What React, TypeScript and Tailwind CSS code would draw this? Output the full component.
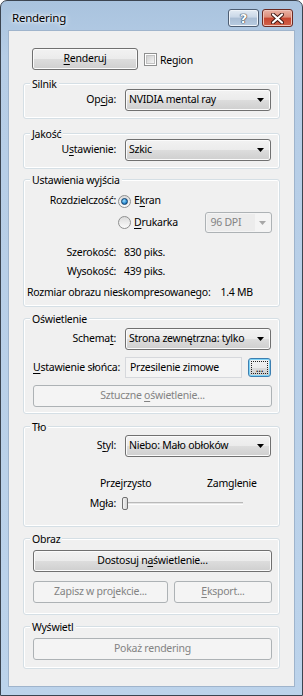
import type { ReactNode } from "react";

const btnFace =
  "bg-[linear-gradient(to_bottom,#f2f2f2_0%,#ebebeb_50%,#dddddd_50%,#cfcfcf_100%)] border border-[#707070] rounded-[3px] shadow-[inset_0_0_0_1px_#fbfbfb]";
const btnDisabled = "bg-[#f4f4f4] border border-[#adb2b5] rounded-[3px] text-[#838383]";

const U = ({ children }: { children: ReactNode }) => <span className="underline underline-offset-2">{children}</span>;

const Group = ({ title, className, children }: { title: string; className: string; children: ReactNode }) => (
  <div className={`flex flex-col border border-[#d5dfe5] rounded-[3px] shadow-[inset_0_0_0_1px_#ffffff] pl-[9px] pr-[7px] ${className}`}>
    <span className="-mt-[8px] -ml-[3px] h-[16px] leading-[16px] px-[2px] bg-[#f0f0f0] self-start">{title}</span>
    {children}
  </div>
);

const Arrow = ({ color = "#000" }: { color?: string }) => (
  <svg width="7" height="4" viewBox="0 0 7 4">
    <path d="M0 0h7L3.5 4z" fill={color} />
  </svg>
);

const Combo = ({ value, className = "" }: { value: string; className?: string }) => (
  <div className={`${btnFace} h-[22px] w-[146px] flex items-center pl-[3px] pr-[6px] ${className}`}>
    <span className="flex-1 whitespace-nowrap overflow-hidden">{value}</span>
    <Arrow />
  </div>
);

const Label = ({ children, w = "w-[83px]" }: { children: ReactNode; w?: string }) => (
  <span className={`${w} text-right whitespace-nowrap`}>{children}</span>
);

const Radio = ({ checked }: { checked?: boolean }) => (
  <span className="w-[13px] h-[13px] rounded-full border border-[#8e8f8f] bg-[linear-gradient(to_bottom,#dcdcdc,#fbfbfb)] flex items-center justify-center shrink-0">
    {checked && (
      <span className="w-[7px] h-[7px] rounded-full border border-[#0f3f6c] bg-[radial-gradient(circle_at_40%_35%,#9fe0ff_0%,#2b8ad0_60%,#134f86_100%)]" />
    )}
  </span>
);

const Button = ({ children, className = "", disabled }: { children: ReactNode; className?: string; disabled?: boolean }) => (
  <div className={`${disabled ? btnDisabled : btnFace} h-[22px] flex items-center justify-center whitespace-nowrap ${className}`}>
    {children}
  </div>
);

export default function App() {
  return (
    <div className="w-[303px] h-[696px] font-['Noto_Sans',sans-serif] text-[10.5px] tracking-[-0.25px] text-black">
      <div className="w-[303px] h-[696px] flex flex-col border border-[#3b4450] rounded-t-[7px] bg-[linear-gradient(to_bottom,#a9c3de_0%,#b6cde6_8%,#bcd3eb_100%)]">
        {/* title bar */}
        <div className="h-[29px] flex items-start shrink-0">
          <span className="ml-[11px] mt-[10px] text-[11.5px] leading-[14px] [text-shadow:0_0_6px_#ffffff,0_0_3px_#ffffff]">Rendering</span>
          <div className="ml-auto mr-[9px] mt-[8px] flex gap-[3px]">
            <div className="w-[31px] h-[18px] rounded-[3px] border border-[#4d5d72] bg-[linear-gradient(to_bottom,#e3ebf4_0%,#c9d7e7_45%,#a9bdd4_50%,#b8cce1_100%)] shadow-[inset_0_0_0_1px_#eef3f9] flex items-center justify-center">
              <span className="text-white font-bold text-[13px] leading-none font-['DejaVu_Sans',sans-serif] [text-shadow:0_0_1px_#2a3440,0_0_1px_#2a3440,0_0_1px_#2a3440]">?</span>
            </div>
            <div className="w-[31px] h-[18px] rounded-[3px] border border-[#6b2a22] bg-[linear-gradient(to_bottom,#eab3a6_0%,#dc8c78_45%,#c7452f_50%,#d0624a_100%)] shadow-[inset_0_0_0_1px_#f0c3b8] flex items-center justify-center">
              <svg width="13" height="11" viewBox="0 0 13 11">
                <path d="M2 1.5l9 8M11 1.5l-9 8" stroke="#3d1510" strokeWidth="4" strokeLinecap="round" />
                <path d="M2 1.5l9 8M11 1.5l-9 8" stroke="#ffffff" strokeWidth="2.2" strokeLinecap="round" />
              </svg>
            </div>
          </div>
        </div>

        {/* client area */}
        <div className="ml-[7px] w-[287px] h-[657px] bg-[#f0f0f0] border border-[#9fb4cc] flex flex-col px-[14px] shrink-0">
          <div className="mt-[17px] flex items-center">
            <Button className="ml-[9px] w-[106px]">
              <U>R</U>enderuj
            </Button>
            <span className="ml-[6px] w-[13px] h-[13px] border border-[#8e8f8f] bg-white flex items-center justify-center">
              <span className="w-[9px] h-[9px] bg-[linear-gradient(135deg,#d0d0d0,#f4f4f4)] border border-[#c2c2c2]" />
            </span>
            <span className="ml-[3px] mt-[3px]">Region</span>
          </div>

          <Group title="Silnik" className="mt-[13px] pb-[7px]">
            <div className="-mt-[3px] flex items-center">
              <Label>
                Op<U>c</U>ja:
              </Label>
              <Combo value="NVIDIA mental ray" className="ml-[9px]" />
            </div>
          </Group>

          <Group title="Jakość" className="mt-[14px] pb-[7px]">
            <div className="-mt-[3px] flex items-center">
              <Label>
                U<U>s</U>tawienie:
              </Label>
              <Combo value="Szkic" className="ml-[9px]" />
            </div>
          </Group>

          <Group title="Ustawienia wyjścia" className="mt-[10px] pb-[5px]">
            <div className="mt-[5px] h-[16px] flex items-center">
              <Label>Rozdzielczość:</Label>
              <span className="ml-[2px]">
                <Radio checked />
              </span>
              <span className="ml-[3px]">
                E<U>k</U>ran
              </span>
            </div>
            <div className="mt-[3px] h-[21px] flex items-center">
              <span className="ml-[85px]">
                <Radio />
              </span>
              <span className="ml-[3px] w-[72px]">
                <U>D</U>rukarka
              </span>
              <div className={`${btnDisabled} h-[21px] w-[67px] flex items-center pl-[1px] pr-[5px]`}>
                <span className="flex-1 h-[17px] leading-[17px] bg-[#ececec] pl-[3px] mr-[4px]">96 DPI</span>
                <Arrow color="#a7a7a7" />
              </div>
            </div>
            <div className="mt-[12px] h-[16px] flex items-center">
              <Label>Szerokość:</Label>
              <span className="ml-[8px]">830 piks.</span>
            </div>
            <div className="mt-[3px] h-[16px] flex items-center">
              <Label>Wysokość:</Label>
              <span className="ml-[8px]">439 piks.</span>
            </div>
            <div className="mt-[5px] h-[16px] flex items-center -ml-[6px] whitespace-nowrap">
              <span>Rozmiar obrazu nieskompresowanego:</span>
              <span className="ml-[10px]">1.4 MB</span>
            </div>
          </Group>

          <Group title="Oświetlenie" className="mt-[11px] pb-[6px]">
            <div className="mt-[1px] flex items-center">
              <Label>
                Schema<U>t</U>:
              </Label>
              <Combo value="Strona zewnętrzna: tylko" className="ml-[9px]" />
            </div>
            <div className="mt-[7px] h-[21px] flex items-center">
              <span className="whitespace-nowrap w-[92px]">
                <U>U</U>stawienie słońca:
              </span>
              <div className="w-[117px] h-[21px] border border-[#d6d8dc] bg-[#f4f4f4] flex items-center pl-[4px] whitespace-nowrap">
                Przesilenie zimowe
              </div>
              <div className="ml-[6px] w-[23px] h-[19px] rounded-[3px] border border-[#3c7fb1] bg-[linear-gradient(to_bottom,#f2f2f2_0%,#ebebeb_50%,#dddddd_50%,#cfcfcf_100%)] shadow-[inset_0_0_0_1px_#7ed3f7] p-[2px]">
                <div className="w-full h-full border border-dotted border-[#222] flex items-end justify-center leading-[10px]">...</div>
              </div>
            </div>
            <Button disabled className="mt-[7px]">
              Sztuczne&nbsp;<U>o</U>świetlenie...
            </Button>
          </Group>

          <Group title="Tło" className="mt-[12px] pb-[15px]">
            <div className="mt-[0px] flex items-center">
              <Label>
                S<U>t</U>yl:
              </Label>
              <Combo value="Niebo: Mało obłoków" className="ml-[9px]" />
            </div>
            <div className="mt-[19px] h-[16px] flex items-center pl-[67px] whitespace-nowrap">
              <span className="w-[107px]">Przejrzysto</span>
              <span>Zamglenie</span>
            </div>
            <div className="mt-[4px] h-[15px] flex items-center">
              <Label>Mgła:</Label>
              <div className="ml-[6px] w-[121px] h-[15px] relative flex items-center">
                <div className="ml-[3px] w-[118px] h-[3px] border-t border-[#b9b9b9] bg-[#e4e4e4] border-b border-b-[#fdfdfd]" />
                <div className="absolute left-0 top-[1px] w-[6px] h-[13px] rounded-[2px] border border-[#707070] bg-[linear-gradient(to_right,#f4f4f4,#d5d5d5)]" />
              </div>
            </div>
          </Group>

          <Group title="Obraz" className="mt-[11px] pb-[11px]">
            <Button className="mt-[3px]">
              Dostosuj n<U>a</U>świetlenie...
            </Button>
            <div className="mt-[9px] flex gap-[6px]">
              <Button disabled className="w-[135px]">
                Zapisz w pro<U>j</U>ekcie...
              </Button>
              <Button disabled className="flex-1">
                <U>E</U>ksport...
              </Button>
            </div>
          </Group>

          <Group title="Wyświetl" className="mt-[11px] pb-[8px]">
            <Button disabled className="mt-[3px]">
              Pokaż rendering
            </Button>
          </Group>
        </div>
      </div>
    </div>
  );
}
